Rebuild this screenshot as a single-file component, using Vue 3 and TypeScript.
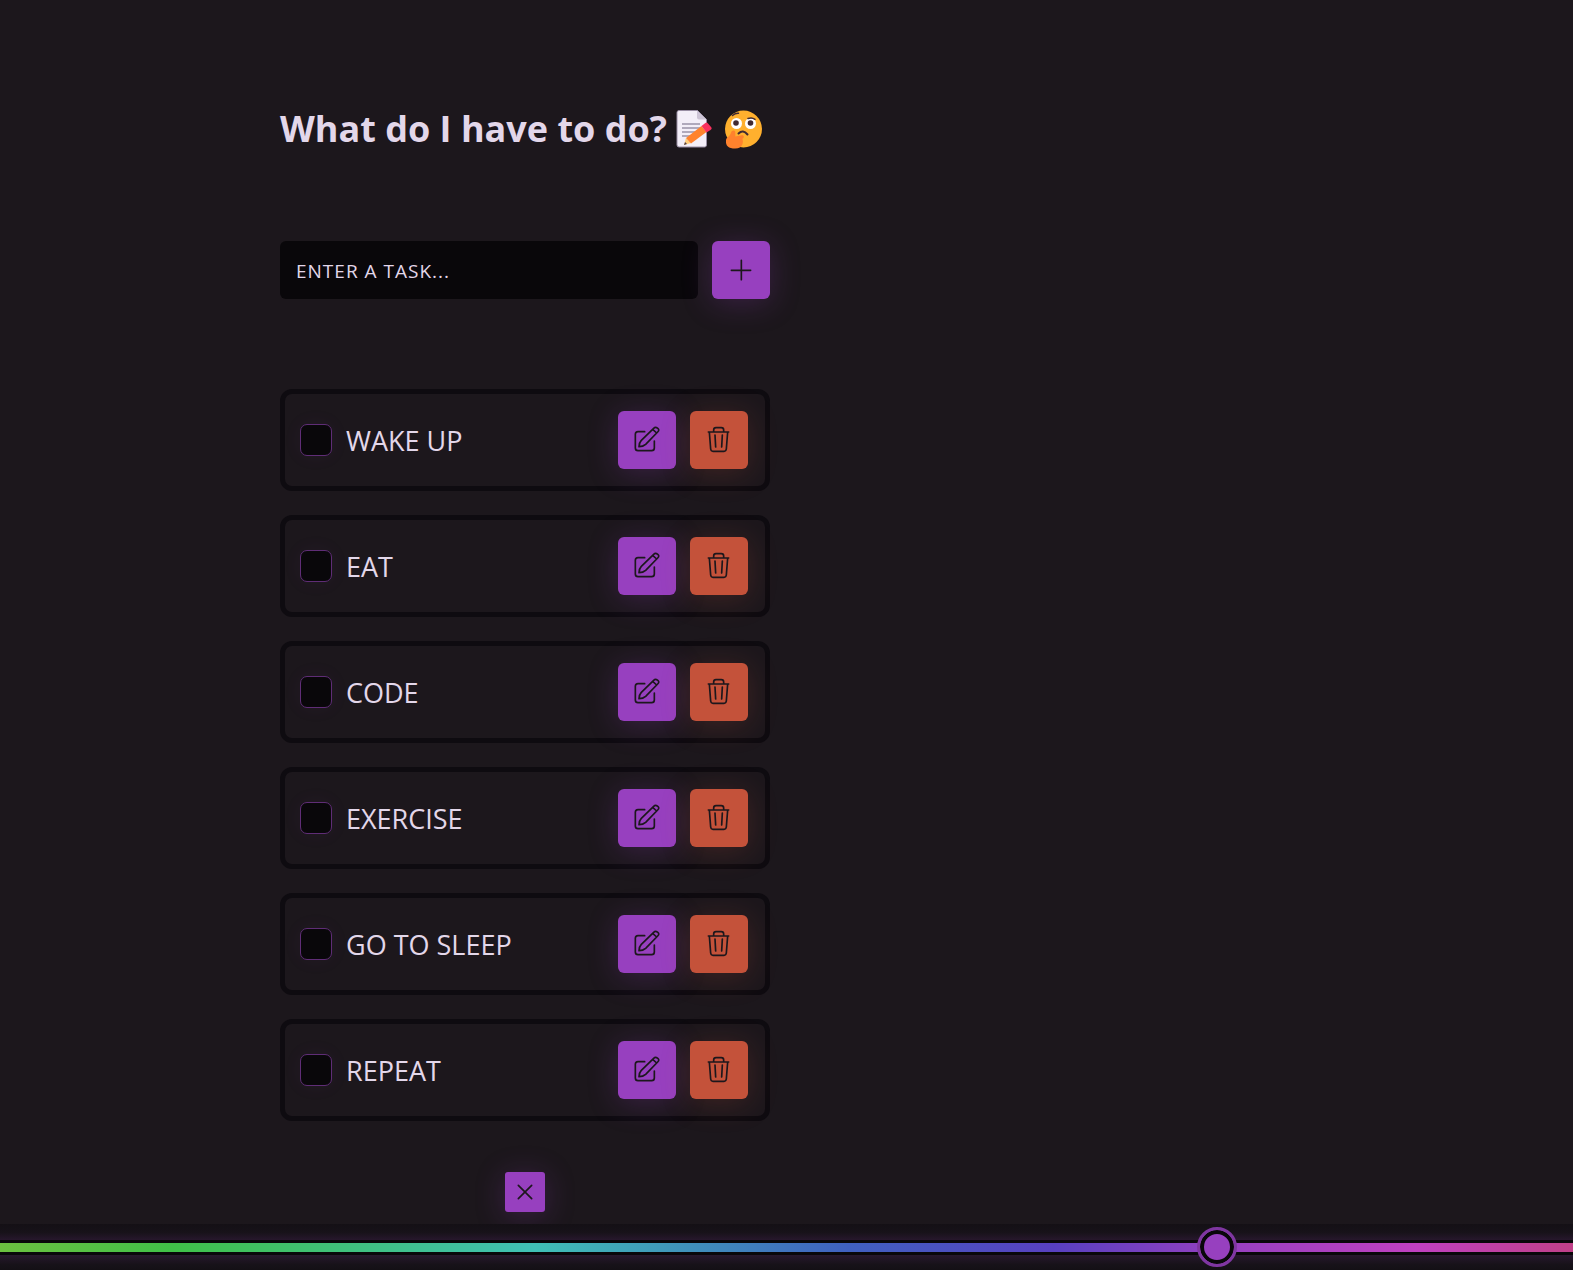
<script setup lang="ts">
import { ref } from 'vue'

interface Task {
  id: number
  name: string
  done: boolean
}

const names = ['Wake up', 'Eat', 'Code', 'Exercise', 'Go to sleep', 'Repeat']
const tasks = ref<Task[]>(names.map((name, id) => ({ id, name, done: false })))
const draft = ref('')
const hue = ref(281)

function addTask() {
  const name = draft.value.trim()
  if (!name) return
  tasks.value.push({ id: Date.now(), name, done: false })
  draft.value = ''
}

function editTask(task: Task) {
  draft.value = task.name
  removeTask(task.id)
}

function removeTask(id: number) {
  tasks.value = tasks.value.filter((task) => task.id !== id)
}
</script>

<template>
  <div class="page" :style="{ '--hue': hue }">
    <main class="content">
      <div class="column">
        <h1 class="title">
          <span>What do I have to do?</span>
          <svg class="emoji" viewBox="0 0 40 40" role="img" aria-label="Memo">
            <path d="M4 1.5h18.500l9 9V36a2 2 0 0 1-2 2H4a2 2 0 0 1-2-2V3.500a2 2 0 0 1 2-2z" fill="#f3eef8" stroke="#998ea4" stroke-width="1" />
            <path d="M22 1.500v7a2 2 0 0 0 2 2h7.500z" fill="#cdc4d6" />
            <path d="M7 15h18M7 19h18M7 23h14M7 27h10" stroke="#9b93a8" stroke-width="1.500" />
            <path d="M9 36l2-7 5 5z" fill="#ffce7c" />
            <path d="M9 36l1-3 2 2z" fill="#4b3a45" />
            <path d="M11 29l15.500-12 5 6L16 34.500z" fill="#ff822d" />
            <path d="M26.500 17l3.500-2.800a2 2 0 0 1 3 .3l3 3.500a2 2 0 0 1-.5 3L31.500 23.500z" fill="#f8315e" />
          </svg>
          <svg class="emoji" viewBox="0 0 40 40" role="img" aria-label="Thinking face">
            <circle cx="20.500" cy="20" r="18.500" fill="#ffb02e" />
            <circle cx="13.500" cy="14.500" r="5.500" fill="#fff" />
            <circle cx="27.500" cy="14.500" r="5.500" fill="#fff" />
            <circle cx="13" cy="14" r="2.800" fill="#402a32" />
            <circle cx="27.500" cy="14" r="2.800" fill="#402a32" />
            <path d="M9.500 6.500q3-2.500 6-2.200M25 9.500q4-1.500 7 .8" fill="none" stroke="#402a32" stroke-width="1.500" stroke-linecap="round" />
            <path d="M15.500 24.500q4.500-4.500 9 1" fill="none" stroke="#402a32" stroke-width="2" stroke-linecap="round" />
            <path d="M10.500 21.500c2 0 2 2 1.800 6l6.500-1.200c2.400-.4 2.700 2.700.5 3.500 1.500 3.200.5 9.700-7 9.700-6.800 0-9.800-2.500-9.300-8 .3-3 1.800-3 3.500-5 1.500-1.800 1.500-5 4-5z" fill="#ff822d" />
          </svg>
        </h1>

        <form class="entry" @submit.prevent="addTask">
          <input v-model="draft" class="entry-field" type="text" placeholder="ENTER A TASK..." aria-label="Enter a task" />
          <button class="button" type="submit" aria-label="Add task">
            <svg class="icon" viewBox="0 0 84 84"><path d="M13 43h58M43 13v58" /></svg>
          </button>
        </form>

        <ul class="tasks">
          <li v-for="task in tasks" :key="task.id" class="task">
            <input :id="`task-${task.id}`" v-model="task.done" class="check" type="checkbox" />
            <label class="name" :for="`task-${task.id}`">{{ task.name }}</label>
            <button class="button" type="button" :aria-label="`Edit ${task.name}`" @click="editTask(task)">
              <svg class="icon" viewBox="0 0 84 84">
                <path d="M35 17H15q-8 0-8 8v41q0 8 8 8h41q8 0 8-8V45" />
                <path d="M18 62q0-12 7-19L62 7q5-5 11-1 8 5 1 12L38 55q-8 7-20 7zM59 10l12 11" />
              </svg>
            </button>
            <button class="button danger" type="button" :aria-label="`Delete ${task.name}`" @click="removeTask(task.id)">
              <svg class="icon" viewBox="0 0 84 84">
                <path d="M10 18h61M26 17v-5q0-7 7-7h16q7 0 7 7v5M13 18l4 51q1 7 7 7h33q6 0 7-7l4-51M30 27l2 36M52 27l-2 36" />
              </svg>
            </button>
          </li>
        </ul>

        <button class="button small" type="button" aria-label="Clear all tasks" @click="tasks = []">
          <svg class="icon" viewBox="0 0 84 84"><path d="M22 22l40 40M62 22L22 62" /></svg>
        </button>
      </div>
    </main>

    <footer class="theme">
      <input v-model.number="hue" class="slider" type="range" min="0" max="360" aria-label="Theme hue" />
    </footer>
  </div>
</template>

<style>
body {
  margin: 0;
  background: #1c171c;
}
</style>

<style scoped>
.page {
  --accent: hsl(var(--hue) 50% 50%);
  --glow: hsl(var(--hue) 50% 50% / 0.25);
  --text: #e3d7ea;
  --dark: #09070a;
  display: flex;
  flex-direction: column;
  min-height: 100vh;
  box-sizing: border-box;
  overflow: hidden;
  background: #1c171c;
  color: var(--text);
  font-family: 'Open Sans', 'Noto Sans', sans-serif;
}

.content {
  display: grid;
  grid-template-columns: 1fr 1fr;
  column-gap: 33px;
  width: calc(100% - 48px);
  max-width: 1013px;
  margin: 0 auto;
  padding: 104px 0 12px;
}

.column {
  display: flex;
  flex-direction: column;
}

.title {
  display: flex;
  align-items: center;
  gap: 8px;
  height: 50px;
  margin: 0;
  font-size: 36px;
  line-height: 50px;
  font-weight: 700;
  white-space: nowrap;
}

.emoji {
  flex: none;
  width: 40px;
  height: 40px;
}

.entry {
  display: flex;
  gap: 14px;
  margin-top: 87px;
}

.entry-field {
  flex: 1;
  min-width: 0;
  height: 58px;
  box-sizing: border-box;
  padding: 2px 16px 0;
  border: 0;
  border-radius: 6px;
  outline: 0;
  background: var(--dark);
  color: var(--text);
  font: 400 19px 'Open Sans', 'Noto Sans', sans-serif;
  letter-spacing: 1px;
}

.entry-field::placeholder {
  color: var(--text);
  opacity: 1;
}

.button {
  display: flex;
  flex: none;
  align-items: center;
  justify-content: center;
  width: 58px;
  height: 58px;
  padding: 0;
  border: 0;
  border-radius: 6px;
  background: var(--accent);
  box-shadow: 0 4px 30px var(--glow);
  cursor: pointer;
}

.danger {
  background: #c4523a;
  box-shadow: 0 4px 30px rgb(196 82 58 / 0.22);
}

.small {
  align-self: center;
  width: 40px;
  height: 40px;
  margin-top: 51px;
  border-radius: 3px;
}

.icon {
  width: 28px;
  height: 28px;
  fill: none;
  stroke: #1c171c;
  stroke-width: 5;
  stroke-linecap: round;
  stroke-linejoin: round;
}

.tasks {
  display: flex;
  flex-direction: column;
  gap: 24px;
  margin: 0;
  padding: 90px 0 0;
  list-style: none;
}

.task {
  display: flex;
  align-items: center;
  gap: 14px;
  height: 102px;
  box-sizing: border-box;
  padding: 0 17px 0 15px;
  border: 5px solid #0e0b10;
  border-radius: 12px;
}

.check {
  appearance: none;
  flex: none;
  width: 32px;
  height: 32px;
  margin: 0;
  border: 1px solid hsl(var(--hue) 45% 32%);
  border-radius: 7px;
  background: var(--dark);
  box-shadow: 0 0 20px hsl(var(--hue) 50% 50% / 0.06);
}

.check:checked {
  background: var(--accent);
}

.name {
  flex: 1;
  padding-top: 2px;
  font-size: 27px;
  line-height: 40px;
  text-transform: uppercase;
}

.theme {
  display: flex;
  align-items: center;
  height: 46px;
  margin-top: auto;
  position: relative;
  background: linear-gradient(#141015 0, #171219 18%, #29182f 37%, #29182f 65%, #171219 88%, #141015);
}

.slider {
  appearance: none;
  width: 100%;
  height: 15px;
  margin: 0;
  background: transparent;
}

.slider::-webkit-slider-runnable-track {
  height: 15px;
  box-sizing: border-box;
  border: solid var(--dark);
  border-width: 3px 0;
  background: linear-gradient(90deg, #6cc040, #40c048 11%, #40c0b6 34%, #4060c0 54%, #5840c0 67%, #9640c0 78%, #c040c0 90%, #c04088);
}

.slider::-webkit-slider-thumb {
  appearance: none;
  width: 40px;
  height: 40px;
  box-sizing: border-box;
  margin-top: -16px;
  border: 3px solid hsl(var(--hue) 50% 42%);
  border-radius: 50%;
  background: var(--accent);
  box-shadow: inset 0 0 0 4px var(--dark);
}
</style>
